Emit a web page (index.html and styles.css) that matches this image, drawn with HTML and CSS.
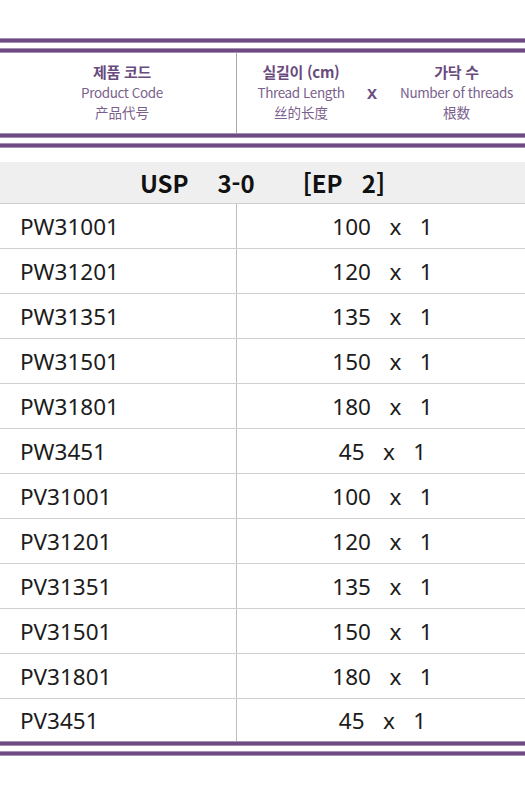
FILE: index.html
```html
<!DOCTYPE html>
<html lang="ko">
<head>
<meta charset="utf-8">
<link rel="stylesheet" href="styles.css">
</head>
<body>
<div class="page">
  <div class="rule"><div class="line"></div><div class="line"></div></div>
  <div class="head">
    <div class="hcol c1">
      <div class="ko">제품 코드</div>
      <div class="en">Product Code</div>
      <div class="zh">产品代号</div>
    </div>
    <div class="hcol c2">
      <div class="ko">실길이 (cm)</div>
      <div class="en">Thread Length</div>
      <div class="zh">丝的长度</div>
    </div>
    <div class="hx">X</div>
    <div class="hcol c3">
      <div class="ko">가닥 수</div>
      <div class="en">Number of threads</div>
      <div class="zh">根数</div>
    </div>
  </div>
  <div class="rule"><div class="line"></div><div class="line"></div></div>
  <div class="title">USP   3-0     [EP  2]</div>
  <div class="rows">
    <div class="row"><div class="code">PW31001</div><div class="val">100   x   1</div></div>
    <div class="row"><div class="code">PW31201</div><div class="val">120   x   1</div></div>
    <div class="row"><div class="code">PW31351</div><div class="val">135   x   1</div></div>
    <div class="row"><div class="code">PW31501</div><div class="val">150   x   1</div></div>
    <div class="row"><div class="code">PW31801</div><div class="val">180   x   1</div></div>
    <div class="row"><div class="code">PW3451</div><div class="val">45   x   1</div></div>
    <div class="row"><div class="code">PV31001</div><div class="val">100   x   1</div></div>
    <div class="row"><div class="code">PV31201</div><div class="val">120   x   1</div></div>
    <div class="row"><div class="code">PV31351</div><div class="val">135   x   1</div></div>
    <div class="row"><div class="code">PV31501</div><div class="val">150   x   1</div></div>
    <div class="row"><div class="code">PV31801</div><div class="val">180   x   1</div></div>
    <div class="row"><div class="code">PV3451</div><div class="val">45   x   1</div></div>
  </div>
  <div class="rule"><div class="line"></div><div class="line"></div></div>
</div>
</body>
</html>
```

FILE: styles.css
```css
* { box-sizing: border-box; }
html, body { margin: 0; padding: 0; background: #fff; }
.page {
  width: 525px;
  padding-top: 38px;
  font-family: "Noto Sans CJK KR", "Noto Sans", sans-serif;
}
.rule {
  display: flex;
  flex-direction: column;
  gap: 5px;
}
.line {
  height: 5px;
  background: #6e4b82;
  border-top: 1px solid #a58fb4;
  border-bottom: 1px solid #a58fb4;
}
.head {
  display: flex;
  height: 80px;
  color: #6d4f80;
}
.hcol {
  display: flex;
  flex-direction: column;
  align-items: center;
  justify-content: center;
  text-align: center;
  white-space: nowrap;
  padding-bottom: 4px;
}
.c1 {
  width: 237px;
  padding-left: 8px;
  border-right: 1px solid #a9a9a9;
}
.c2 { width: 128px; }
.c3 { flex: 1; padding-left: 9px; }
.hx {
  width: 14px;
  display: flex;
  align-items: center;
  justify-content: center;
  font-weight: 700;
  font-size: 15px;
  color: #6d4f80;
  font-family: "Noto Sans", sans-serif;
}
.ko {
  font-size: 15px;
  font-weight: 700;
  line-height: 21px;
  color: #6a4b7e;
  letter-spacing: -0.3px;
}
.en {
  font-size: 13.5px;
  line-height: 20px;
  color: #7a5f8d;
  letter-spacing: -0.4px;
}
.zh {
  font-size: 13.5px;
  line-height: 20px;
  color: #7a5f8d;
}
.title {
  margin-top: 14px;
  height: 42px;
  background: #efefef;
  border-bottom: 1px solid #cfcfcf;
  display: flex;
  align-items: center;
  justify-content: center;
  white-space: pre;
  font-size: 24px;
  font-weight: 700;
  word-spacing: 2.9px;
  color: #111;
  font-family: "Noto Sans CJK KR", sans-serif;
}
.rows { display: flex; flex-direction: column; }
.row {
  display: flex;
  height: 45px;
  border-top: 1px solid #d0d0d0;
}
.row:first-child { border-top: none; height: 44px; }
.row:last-child { height: 43px; }
.code {
  width: 237px;
  border-right: 1px solid #bdbdbd;
  padding-left: 20px;
  display: flex;
  align-items: center;
  font-family: "Noto Sans", sans-serif;
  font-size: 22.5px;
  color: #1c1c1c;
}
.val {
  flex: 1;
  display: flex;
  align-items: center;
  justify-content: center;
  white-space: pre;
  word-spacing: 0.3px;
  padding-left: 3px;
  font-family: "Noto Sans", sans-serif;
  font-size: 22.5px;
  color: #1c1c1c;
}
```
